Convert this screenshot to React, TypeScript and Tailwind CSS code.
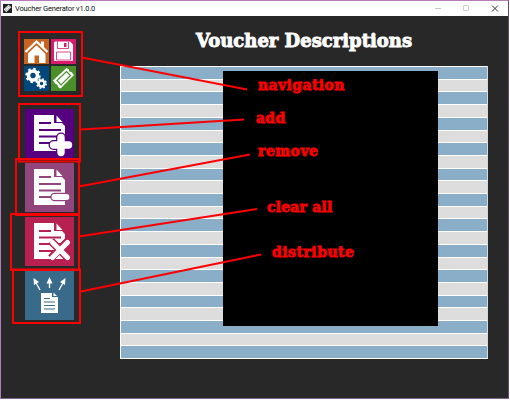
import React from "react";

function DocShape() {
  return (
    <>
      <path d="M9 6H29V14H37L40 17V42H9Z" fill="#fff" />
      <path d="M31.500 6.500L37.500 13H31.500Z" fill="#fff" />
    </>
  );
}

function AddIcon() {
  return (
    <svg viewBox="0 0 49 49" className="size-full">
      <DocShape />
      <path d="M14 14H26M14 21H36M14 27.500H36M14 34H30" stroke="#56007f" strokeWidth="2" />
      <path d="M36 28.500V43M28.500 36H43.500" stroke="#56007f" strokeWidth="10" strokeLinecap="round" />
      <path d="M36 28.500V43.500M28.500 36H43.500" stroke="#fff" strokeWidth="7.400" strokeLinecap="round" />
    </svg>
  );
}

function RemoveIcon() {
  return (
    <svg viewBox="0 0 49 49" className="size-full">
      <DocShape />
      <path d="M14 14H26M14 21H36M14 27.500H36M14 34H30" stroke="#91457c" strokeWidth="2" />
      <path d="M29.500 34H41.500" stroke="#91457c" strokeWidth="8.500" strokeLinecap="round" />
      <path d="M29.500 34H41.500" stroke="#fff" strokeWidth="5.800" strokeLinecap="round" />
    </svg>
  );
}

function ClearIcon() {
  return (
    <svg viewBox="0 0 49 49" className="size-full">
      <DocShape />
      <path d="M14 14H26M14 20.500H36M14 27H36M14 34H30" stroke="#b72050" strokeWidth="2" />
      <path d="M26 24L43 41M43 24L26 41" stroke="#b72050" strokeWidth="8" />
      <path d="M27.500 25.500L42.500 40.500M42.500 25.500L27.500 40.500" stroke="#fff" strokeWidth="5.200" strokeLinecap="round" />
    </svg>
  );
}

function DistributeIcon() {
  return (
    <svg viewBox="0 0 49 49" className="size-full" fill="#fff">
      <path d="M16 22H27V26H33V42H16Z" />
      <path d="M28.500 21.500L32 25H28.500Z" />
      <path d="M19 27.500H25M19 31H30M19 34.500H30M19 38H30" stroke="#3a6a8a" strokeWidth="1.200" />
      <path d="M15 19L10 10M24.500 17V10M34 19L39 10" stroke="#fff" strokeWidth="1.300" />
      <path d="M8.500 7L9 14L14 11ZM24.500 6L21.500 12.500H27.500ZM40.500 7L35 11L40 14Z" />
    </svg>
  );
}

function HomeIcon() {
  return (
    <svg viewBox="0 0 25 25" className="size-full">
      <path d="M12.500 4.500L21.500 13.500V24H15V16.500H10.500V24H4V13.500Z" fill="#fff" />
      <path d="M17 2.500H20V8H17Z" fill="#fff" />
      <path d="M1.500 14.500L12.500 4L23.500 14.500" fill="none" stroke="#c86422" strokeWidth="3.200" />
      <path d="M1.500 13L12.500 2.500L23.500 13" fill="none" stroke="#fff" strokeWidth="2.200" />
    </svg>
  );
}

function SaveIcon() {
  return (
    <svg viewBox="0 0 25 25" className="size-full">
      <path d="M3 4Q3 2.500 4 2.500H19L22 5.500V21Q22 22 21 22H4Q3 22 3 21Z" fill="#fff" />
      <path d="M6.500 2.500V9.500H17.500V2.500M5.500 21V13H19.500V21Z" fill="none" stroke="#d81b6a" strokeWidth="0.800" />
      <path d="M13 4H15.500V8H13Z" fill="#d81b6a" />
    </svg>
  );
}

function GearsIcon() {
  return (
    <svg viewBox="0 0 25 25" className="size-full" fill="none" stroke="#fff">
      <circle cx="9" cy="9.500" r="4.500" strokeWidth="3.600" />
      <circle cx="9" cy="9.500" r="6.700" strokeWidth="2" strokeDasharray="2.630 2.630" />
      <circle cx="17.500" cy="17.500" r="3" strokeWidth="2.600" />
      <circle cx="17.500" cy="17.500" r="4.600" strokeWidth="1.600" strokeDasharray="1.810 1.810" />
    </svg>
  );
}

function TicketIcon({ color }: { color: string }) {
  return (
    <svg viewBox="0 0 25 25" className="size-full">
      <path
        d="M2 14.500L15.500 2L18 3.500Q17.500 6 20.500 6L23 9L9.500 22.500L7 21Q7 18 4.500 18Z"
        fill="#fff"
      />
      <path d="M6 14.500L15.500 5.500L19.500 9.500L10 19Z" fill="none" stroke={color} strokeWidth="1.200" />
    </svg>
  );
}

const labels = [
  { text: "navigation", place: "left-[258px] top-[75px] tracking-[0.4px]" },
  { text: "add", place: "left-[256px] top-[108px] tracking-[0.3px]" },
  { text: "remove", place: "left-[258px] top-[141px] tracking-[0.5px]" },
  { text: "clear all", place: "left-[267px] top-[197px] tracking-[0.2px]" },
  { text: "distribute", place: "left-[272px] top-[242px] tracking-[0.5px]" },
];

function Annotations() {
  return (
    <div className="pointer-events-none absolute inset-0">
      <svg viewBox="0 0 510 400" className="absolute inset-0 h-[400px] w-[510px]" fill="none" stroke="#fb0000" strokeWidth="2">
        <path d="M19 32H82V96H19Z" />
        <path d="M19 104H80V161.500H19Z" />
        <path d="M16 159H79V215H16Z" />
        <path d="M11 214H79V270H11Z" />
        <path d="M13 269.500H80V323H13Z" />
        <path d="M82 57.500L247 89.500M81 129.500L244 119.500M79 186.500L250 154.500M79 236.500L257 209M81 291.500L261 254.500" />
      </svg>
      {labels.map((l) => (
        <span
          key={l.text}
          className={`absolute whitespace-nowrap font-['DejaVu_Serif',serif] text-[14px] leading-[20px] font-bold text-[#fb0000] [-webkit-text-stroke:0.8px_#fb0000] ${l.place}`}
        >
          {l.text}
        </span>
      ))}
    </div>
  );
}

export default function App() {
  return (
    <div className="h-[400px] w-[510px] overflow-hidden bg-white">
      <div className="relative flex h-[399px] w-[509px] flex-col border border-t-[#b57bbb] border-r-[#70417b] border-b-[#80658a] border-l-[#b57bbb] bg-[#282828]">
        <header className="flex h-[15px] shrink-0 items-center bg-white pl-[2px] font-['Roboto',sans-serif] text-[7.500px] text-[#111]">
          <span className="size-[9px] bg-[#222]"><TicketIcon color="#222" /></span>
          <span className="ml-[3px] tracking-[-0.18px]">Voucher Generator v1.0.0</span>
          <svg viewBox="0 0 70 9" className="mr-[9px] ml-auto h-[9px] w-[70px]" fill="none">
            <path d="M6 4.500H12" stroke="#c8c8c8" />
            <path d="M34.500 1.500H39.500V6.500H34.500Z" stroke="#d0d0d0" />
            <path d="M63 1.500L69 7.500M69 1.500L63 7.500" stroke="#333" />
          </svg>
        </header>
        <main className="flex flex-1">
          <aside className="flex w-[119px] shrink-0 flex-col pt-[23px] pl-[23px]">
            <nav className="grid w-[52px] grid-cols-2 gap-[2px]">
              <button className="size-[25px] bg-[#c86422]"><HomeIcon /></button>
              <button className="size-[25px] bg-[#d81b6a]"><SaveIcon /></button>
              <button className="size-[25px] bg-[#00477b]"><GearsIcon /></button>
              <button className="size-[25px] bg-[#49902b]"><TicketIcon color="#49902b" /></button>
            </nav>
            <div className="mt-[18px] ml-[1px] flex flex-col gap-[5px]">
              <button className="size-[49px] bg-[#56007f]"><AddIcon /></button>
              <button className="size-[49px] bg-[#91457c]"><RemoveIcon /></button>
              <button className="size-[49px] bg-[#b72050]"><ClearIcon /></button>
              <button className="size-[49px] bg-[#3a6a8a]"><DistributeIcon /></button>
            </div>
          </aside>
          <section className="flex w-[368px] flex-col">
            <h1 className="h-[50px] pt-[11px] text-center font-['DejaVu_Serif',serif] text-[18px] leading-[27px] font-bold whitespace-nowrap text-white [-webkit-text-stroke:0.9px_white]">
              Voucher Descriptions
            </h1>
            <div className="relative flex h-[293px] flex-col border-x border-b border-white border-r-[#d5d9dd]">
              {Array.from({ length: 23 }, (_, i) => (
                <div key={i} className="flex-1 border-t border-white odd:bg-[#8aadc8] even:bg-[#dddddd]" />
              ))}
              <div className="absolute top-[5px] left-[102px] h-[255px] w-[215px] bg-black" />
            </div>
          </section>
        </main>
      </div>
      <Annotations />
    </div>
  );
}
